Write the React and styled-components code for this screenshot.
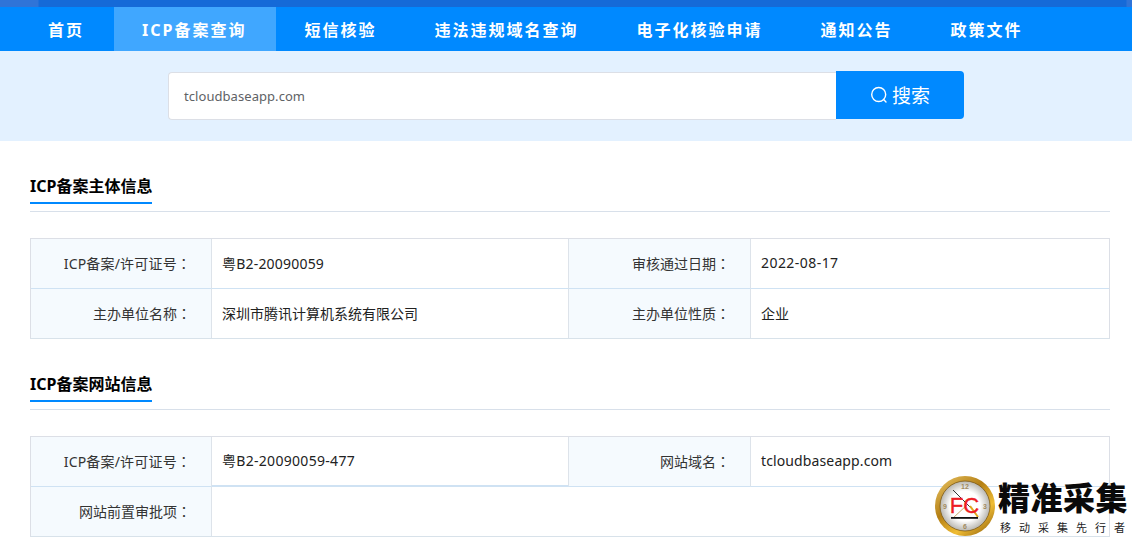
import React from "react";
import styled, { createGlobalStyle } from "styled-components";

const GlobalStyle = createGlobalStyle`
  html, body {
    margin: 0;
    padding: 0;
    background: #fff;
  }
  body {
    font-family: "Noto Sans", "Noto Sans CJK SC", sans-serif;
    color: #333;
  }
  * { box-sizing: border-box; }
`;

const Page = styled.div`
  position: relative;
  width: 1132px;
  height: 537px;
  overflow: hidden;
`;

const TopBand = styled.div`
  height: 7px;
  background: linear-gradient(90deg, #2f74d8 0, #2f74d8 38px, #156ad8 39px, #156ad8 1126px, #2f74d8 1127px);
`;

const Nav = styled.nav`
  display: flex;
  height: 44px;
  padding-left: 20px;
  background: #0089ff;
`;

const NavItem = styled.a`
  display: flex;
  align-items: center;
  padding: 0 30px 0 28px;
  color: #fff;
  font-size: 16px;
  font-weight: 700;
  letter-spacing: 2px;
  background: ${(p) => (p.$active ? "#40a7ff" : "transparent")};
`;

const SearchBand = styled.div`
  display: flex;
  height: 90px;
  padding: 20px 0 0 168px;
  background: #e3f1ff;
`;

const SearchInput = styled.div`
  display: flex;
  align-items: center;
  width: 668px;
  height: 48px;
  margin-top: 1px;
  padding-left: 15px;
  background: #fff;
  border: 1px solid #dcdfe6;
  border-right: none;
  border-radius: 4px 0 0 4px;
  color: #606266;
  font-size: 13px;
  letter-spacing: 0.06px;
`;

const SearchButton = styled.button`
  display: flex;
  align-items: center;
  justify-content: center;
  gap: 4px;
  width: 128px;
  height: 48px;
  padding: 0;
  border: none;
  border-radius: 0 4px 4px 0;
  background: #0089ff;
  color: #fff;
  font-family: inherit;
  font-size: 19px;
`;

const Section = styled.section`
  padding: ${(p) => p.$top}px 22px 0 30px;
`;

const SectionHead = styled.div`
  height: 42px;
  border-bottom: 1px solid #d8e0ea;
`;

const SectionTitle = styled.h3`
  display: inline-block;
  height: 34px;
  margin: 0;
  line-height: 32px;
  font-size: 16px;
  font-weight: 700;
  color: #000;
  border-bottom: 2px solid #0089ff;
`;

const Grid = styled.div`
  display: grid;
  grid-template-columns: 181px 357px 182px 1fr;
  grid-template-rows: 50px 49px;
  margin-top: 26px;
  border: 1px solid #dcdfe6;
  border-bottom-color: #d8e2ea;
`;

const Label = styled.div`
  display: flex;
  align-items: center;
  justify-content: flex-end;
  padding: 0 20px 2px 0;
  background: #f5fafe;
  font-size: 14px;
  color: #333;
  letter-spacing: ${(p) => p.$track || 0}px;
  border-right: 1px solid #dde3ea;
  border-bottom: ${(p) => (p.$last ? "none" : "1px solid #cfe2f3")};
`;

/* the TC cut centres the full-width colon in its box, as the original does */
const Colon = styled.span`
  font-family: "Noto Sans CJK TC", sans-serif;
`;

const Value = styled.div`
  display: flex;
  align-items: center;
  padding: 0 0 2px 10px;
  font-size: 14px;
  color: #222;
  letter-spacing: ${(p) => p.$track || 0}px;
  border-right: ${(p) => (p.$end ? "none" : "1px solid #dde3ea")};
  border-bottom: ${(p) =>
    p.$last ? "none" : p.$thick ? "2px solid #cfe2f3" : "1px solid #cfe2f3"};
  grid-column: ${(p) => (p.$wide ? "span 3" : "auto")};
`;

const Watermark = styled.div`
  position: absolute;
  left: 935px;
  top: 476px;
  display: flex;
  align-items: flex-start;
  gap: 3px;
`;

const BrandText = styled.div`
  display: flex;
  flex-direction: column;
  padding-top: 1px;
`;

const BrandName = styled.div`
  font-family: "Noto Sans CJK SC", sans-serif;
  font-size: 32px;
  font-weight: 900;
  line-height: 38px;
  letter-spacing: 0.5px;
  color: #0a0a0a;
`;

const BrandSlogan = styled.div`
  margin-top: 5px;
  padding-left: 2px;
  font-family: "Noto Sans CJK SC", sans-serif;
  font-size: 11px;
  line-height: 14px;
  letter-spacing: 8px;
  color: #222;
  white-space: nowrap;
`;

const navItems = ["首页", "ICP备案查询", "短信核验", "违法违规域名查询", "电子化核验申请", "通知公告", "政策文件"];

const ClockLogo = () => (
  <svg width="60" height="60" viewBox="0 0 60 60">
    <defs>
      <linearGradient id="bezel" x1="0.1" y1="0" x2="0.9" y2="1">
        <stop offset="0" stopColor="#e6c060" />
        <stop offset="0.4" stopColor="#b47f14" />
        <stop offset="0.7" stopColor="#f0bd34" />
        <stop offset="1" stopColor="#94640e" />
      </linearGradient>
      <radialGradient id="face" cx="0.5" cy="0.5" r="0.5">
        <stop offset="0.6" stopColor="#ffffff" />
        <stop offset="1" stopColor="#b8b6b0" />
      </radialGradient>
    </defs>
    <circle cx="30" cy="30" r="30" fill="url(#bezel)" />
    <circle cx="30" cy="30" r="25" fill="url(#face)" stroke="#7d5a18" strokeWidth="0.8" />
    <g fill="#a08a60" fontFamily="Liberation Sans, sans-serif" fontWeight="700" fontSize="7" textAnchor="middle">
      <text x="30" y="13">12</text>
      <text x="50" y="32.5">3</text>
      <text x="30" y="53">6</text>
      <text x="10" y="32.5">9</text>
    </g>
    <path d="M18 14 L40 36" stroke="#1b1b1b" strokeWidth="0.9" />
    <path d="M18 42 L32 29" stroke="#c9a46a" strokeWidth="1" />
    <path d="M35 30 L43 41" stroke="#e0a81c" strokeWidth="2" />
    <text x="29.5" y="37" fill="#ed1c24" stroke="#ed1c24" strokeWidth="0.4" fontFamily="Liberation Sans, sans-serif" fontSize="22" textAnchor="middle">FC</text>
    <rect x="16" y="41" width="27" height="1.8" fill="#111" />
  </svg>
);

const App = () => (
  <Page>
    <GlobalStyle />
    <TopBand />
    <Nav>
      {navItems.map((item) => (
        <NavItem key={item} $active={item === "ICP备案查询"}>{item}</NavItem>
      ))}
    </Nav>
    <SearchBand>
      <SearchInput>tcloudbaseapp.com</SearchInput>
      <SearchButton>
        <svg width="18" height="18" viewBox="0 0 18 18" fill="none" stroke="#fff" strokeWidth="1.4">
          <circle cx="8.7" cy="8.5" r="7" />
          <path d="M13.6 13.6 L16 16" strokeLinecap="round" />
        </svg>
        搜索
      </SearchButton>
    </SearchBand>

    <Section $top={29}>
      <SectionHead>
        <SectionTitle>ICP备案主体信息</SectionTitle>
      </SectionHead>
      <Grid>
        <Label $track={0.18}>ICP备案/许可证号<Colon>：</Colon></Label>
        <Value $track={0.2}>粤B2-20090059</Value>
        <Label>审核通过日期<Colon>：</Colon></Label>
        <Value $end $track={0.45}>2022-08-17</Value>
        <Label $last>主办单位名称<Colon>：</Colon></Label>
        <Value $last>深圳市腾讯计算机系统有限公司</Value>
        <Label $last>主办单位性质<Colon>：</Colon></Label>
        <Value $last $end>企业</Value>
      </Grid>
    </Section>

    <Section $top={29}>
      <SectionHead>
        <SectionTitle>ICP备案网站信息</SectionTitle>
      </SectionHead>
      <Grid>
        <Label $track={0.18}>ICP备案/许可证号<Colon>：</Colon></Label>
        <Value $thick $track={0.3}>粤B2-20090059-477</Value>
        <Label>网站域名<Colon>：</Colon></Label>
        <Value $end $track={0.12}>tcloudbaseapp.com</Value>
        <Label $last>网站前置审批项<Colon>：</Colon></Label>
        <Value $last $end $wide />
      </Grid>
    </Section>

    <Watermark>
      <ClockLogo />
      <BrandText>
        <BrandName>精准采集</BrandName>
        <BrandSlogan>移动采集先行者</BrandSlogan>
      </BrandText>
    </Watermark>
  </Page>
);

export default App;
